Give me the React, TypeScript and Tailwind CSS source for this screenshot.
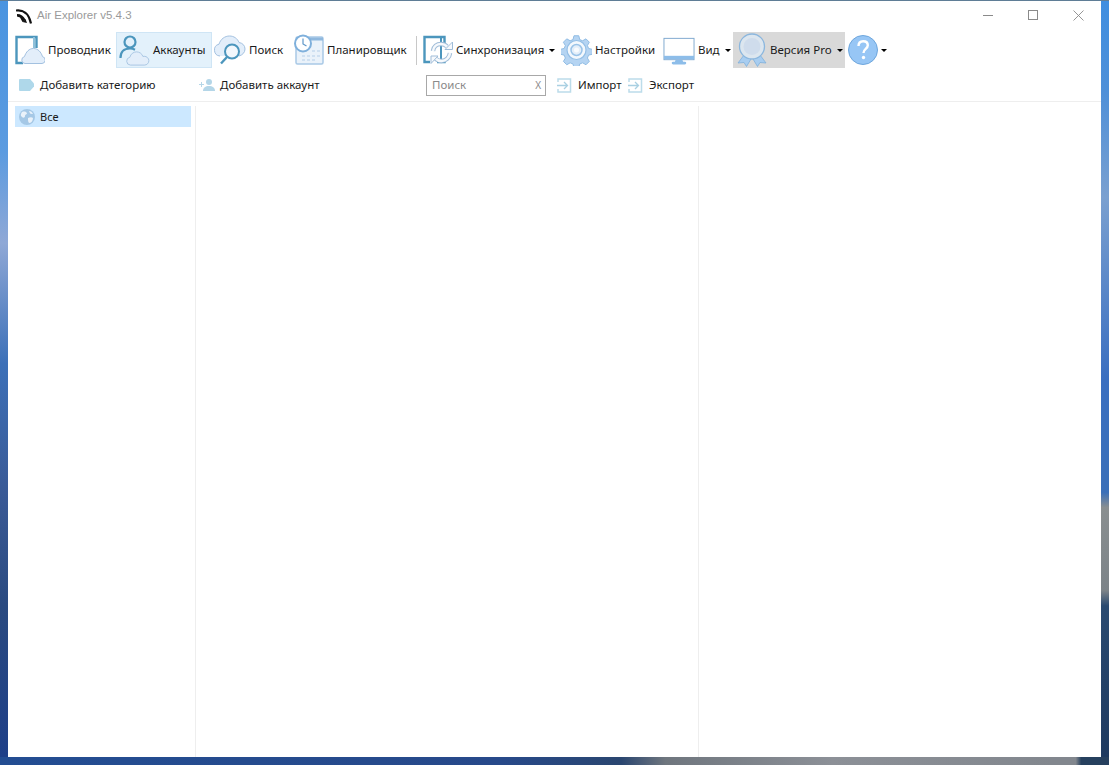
import type { ReactNode } from 'react'

const stroke = '#4c96bd'
const cloudFill = '#e3eefa'
const cloudLine = '#a3c1e0'

const Cloud = ({ x = 0, y = 0, s = 1 }: { x?: number; y?: number; s?: number }) => (
  <path
    transform={`translate(${x} ${y}) scale(${s})`}
    d="M5 16a4.500 4.500 0 0 1-.6-8.900C5.300 3.300 8.500 1 12 1c3.300 0 6.200 2 7.200 5.200.6-.2 1-.2 1.500-.2 2.800 0 5.300 2.300 5.300 5s-2.300 5-5 5z"
    fill={cloudFill}
    stroke={cloudLine}
    strokeWidth="1"
  />
)

const ExplorerIcon = () => (
  <svg width="30" height="32" viewBox="0 0 30 32" fill="none">
    <path d="M8 29H1.500V3H21.500V14" stroke={stroke} strokeWidth="2.400" />
    <path d="M19 3v11" stroke="#8fc0da" strokeWidth="2" />
    <path d="M10 29.500a3.500 3.500 0 0 1-.5-6.900C11 18 14 14.500 18.500 14.500s7.500 3.500 9 8.100a3.500 3.500 0 0 1-.5 6.900z" fill={cloudFill} stroke={cloudLine} />
  </svg>
)

const AccountsIcon = () => (
  <svg width="31" height="32" viewBox="0 0 31 32" fill="none">
    <circle cx="11" cy="8" r="5.500" stroke={stroke} strokeWidth="2.200" />
    <path d="M1.500 24c0-6 3.500-9.500 9.500-9.500 2 0 3.500.4 5 1.200" stroke={stroke} strokeWidth="2.200" />
    <Cloud x={7} y={17} s={0.88} />
  </svg>
)

const SearchIcon = () => (
  <svg width="33" height="32" viewBox="0 0 33 32" fill="none">
    <path
      d="M7 22a6 6 0 0 1-1-11.800C7.500 5 12 2 16.500 2c4.400 0 8 2.500 9.500 6.500 3.500.5 6 3 6 6.500 0 3.500-2.500 6-6 7"
      fill={cloudFill}
      stroke={cloudLine}
      strokeWidth="1"
    />
    <circle cx="19" cy="17.500" r="7" fill="#f2f7fc" stroke={stroke} strokeWidth="2" />
    <path d="M14 23l-6 6.500" stroke={stroke} strokeWidth="2.400" />
  </svg>
)

const SchedulerIcon = () => (
  <svg width="31" height="32" viewBox="0 0 31 32" fill="none">
    <rect x="3" y="3" width="27" height="27" rx="1.500" fill="#eaf2fa" stroke="#a9c9e6" strokeWidth="1.500" />
    <path d="M3 5h27" stroke="#8fb8de" strokeWidth="3" />
    <g fill="#cfe0f1">
      <rect x="19" y="16" width="3" height="2" />
      <rect x="24" y="16" width="3" height="2" />
      <rect x="9" y="21" width="3" height="2" />
      <rect x="14" y="21" width="3" height="2" />
      <rect x="19" y="21" width="3" height="2" />
      <rect x="24" y="21" width="3" height="2" />
      <rect x="9" y="25" width="3" height="2" />
      <rect x="14" y="25" width="3" height="2" />
      <rect x="19" y="25" width="3" height="2" />
    </g>
    <circle cx="10" cy="9.500" r="8" fill="#fff" stroke="#7fb0dc" strokeWidth="2" />
    <path d="M10 4.500v5.500l3.500 2" stroke="#5f97c8" strokeWidth="1.200" />
  </svg>
)

const syncTop = 'M10 17c.5-4.500 4-7 8-7 2.500 0 4.500 1 6 2.500'
const syncBottom = 'M27 19c-.5 4.500-4 8-8.500 8-2.500 0-4.500-1-6-2.500'

const SyncIcon = () => (
  <svg width="30" height="32" viewBox="0 0 30 32" fill="none">
    <path d="M7 28H1.500V3H21.500v6M21.500 27v1H14" stroke={stroke} strokeWidth="2.400" />
    <path d="M18 3v25" stroke={stroke} strokeWidth="2" />
    <path d={syncTop} stroke="#9fbcd8" strokeWidth="4.500" />
    <path d={syncTop} stroke="#f6f9fc" strokeWidth="2.500" />
    <path d="M22 15.500h7.500V8z" fill="#f6f9fc" stroke="#9fbcd8" />
    <path d={syncBottom} stroke="#9fbcd8" strokeWidth="4.500" />
    <path d={syncBottom} stroke="#f6f9fc" strokeWidth="2.500" />
    <path d="M15 22H8v7.500z" fill="#f6f9fc" stroke="#9fbcd8" />
  </svg>
)

const GearIcon = () => (
  <svg width="31" height="32" viewBox="0 0 31 32" fill="none">
    <path
      d="M13 1h5l1 4 3 1.200 3.500-2 3.500 3.500-2 3.500 1.200 3 4 1v5l-4 1-1.200 3 2 3.500-3.500 3.500-3.500-2-3 1.200-1 4h-5l-1-4-3-1.200-3.500 2-3.500-3.500 2-3.500-1.200-3-4-1v-5l4-1 1.200-3-2-3.500 3.500-3.500 3.500 2 3-1.200z"
      fill="#b5d4f2"
      stroke="#8dbae3"
      strokeWidth="1"
      transform="translate(0.500 0.800) scale(0.96)"
    />
    <circle cx="15.500" cy="16" r="9.500" fill="#f3f8fd" stroke="#94bfe6" strokeWidth="1.200" />
    <circle cx="15.500" cy="16" r="5.500" fill="#e3eef9" stroke="#9ac3e8" strokeWidth="1.500" />
    <circle cx="15.500" cy="16" r="2.500" fill="#f8fbfe" />
  </svg>
)

const MonitorIcon = () => (
  <svg width="32" height="32" viewBox="0 0 33 32" fill="none">
    <rect x="1" y="4" width="31" height="22" fill="#fff" stroke="#7fa9cf" strokeWidth="1" />
    <rect x="1" y="22" width="31" height="3.500" fill="#8dbde9" />
    <path d="M13 26h7l1 3h-9z" fill="#8dbde9" />
    <rect x="9" y="28" width="15" height="3" rx="1.500" fill="#8dbde9" />
  </svg>
)

const ProIcon = () => (
  <svg width="30" height="34" viewBox="0 0 30 34" fill="none">
    <path d="M7 22L1 30l6-.5 2.500 4L14 26z" fill="#a8cdf0" stroke="#7fb0dc" strokeWidth="0.800" />
    <path d="M23 22l6 8-6-.5-2.500 4L16 26z" fill="#a8cdf0" stroke="#7fb0dc" strokeWidth="0.800" />
    <circle cx="15" cy="13.500" r="12.500" fill="#dce6ef" stroke="#8cb7de" strokeWidth="1.300" />
    <circle cx="15" cy="13.500" r="8.500" fill="#cfdcec" />
  </svg>
)

const HelpIcon = () => (
  <svg width="30" height="30" viewBox="0 0 30 30" fill="none">
    <circle cx="15" cy="15" r="14.500" fill="#97c6f5" stroke="#6ea6dc" strokeWidth="1" />
    <path d="M10.500 11c0-3 2-4.800 4.700-4.800 2.800 0 4.600 1.700 4.600 4.100 0 3.600-4.300 3.800-4.300 7.700" stroke="#fff" strokeWidth="2.400" />
    <circle cx="15.500" cy="22.500" r="1.700" fill="#fff" />
  </svg>
)

const LogoIcon = () => (
  <svg width="16" height="16" viewBox="0 0 16 16" fill="none">
    <path d="M0 2.500c7-1 13 3 15 13" stroke="#111" strokeWidth="2.200" />
    <path d="M1 6c4 0 6.500 2 8.500 5.500l-3 2.500L4 9.500 1 8.500z" fill="#111" />
    <path d="M11 15l-1.500-4-3 3z" fill="#111" />
  </svg>
)

const Caret = () => <span className="w-0 h-0 border-x-[3px] border-x-transparent border-t-[3px] border-t-black" />

const TagIcon = () => (
  <svg width="15" height="12" viewBox="0 0 15 12">
    <path d="M1 0h10l4 4.500V7.500L11 12H1a1 1 0 0 1-1-1V1a1 1 0 0 1 1-1z" fill="#afd8ea" />
  </svg>
)

const AddUserIcon = () => (
  <svg width="16" height="12" viewBox="0 0 16 12" fill="#b4d6e8">
    <circle cx="10" cy="3" r="3" />
    <path d="M4 12c0-3.500 2.500-5 6-5s6 1.500 6 5z" />
    <path d="M2 3h1v2h2v1H3v2H2V6H0V5h2z" />
  </svg>
)

const BoxArrow = () => (
  <svg width="16" height="15" viewBox="0 0 16 15" fill="none">
    <path d="M1 4V1h12.500v13H1v-3" stroke="#bcdcea" strokeWidth="1.500" />
    <path d="M0 7.500h10M7 4l3.500 3.500L7 11" stroke="#a9d0e2" strokeWidth="1.300" />
  </svg>
)

const GlobeIcon = () => (
  <svg width="16" height="16" viewBox="0 0 16 16">
    <circle cx="8" cy="8" r="8" fill="#a5c8e6" />
    <path d="M3 3c3-1 4 0 5 1 0 2-2 1-2 3S4 9 3 8 1 6 3 3zM9 9c2-1 4-1 5 0 0 3-2 5-4 5-1-1-1-3-1-5zM10 2c2 0 3 1 4 3-2 0-3 0-4-3z" fill="#eaf2fa" />
  </svg>
)

const ToolButton = ({ icon, label, className, caret }: { icon: ReactNode; label: string; className: string; caret?: boolean }) => (
  <div className={`flex items-center h-9 shrink-0 ${className}`}>
    {icon}
    <span className="ml-[3px] whitespace-nowrap">{label}</span>
    {caret && <span className="ml-[5px] flex"><Caret /></span>}
  </div>
)

const App = () => {
  return (
    <div className="h-[765px] w-[1109px] overflow-hidden flex flex-col font-['Noto_Sans','Liberation_Sans',sans-serif] text-[11.5px] text-[#1a1a1a]">
      <div className="h-px shrink-0 bg-[#5f7d96]" />
      <div className="flex-1 min-h-0 flex">
        {/* wallpaper on the left of the window */}
        <div className="w-2 shrink-0 bg-[linear-gradient(180deg,#4a94e0_0%,#5b9be0_20%,#8fa8d6_32%,#3c70b8_48%,#3a5a96_65%,#2a4a80_80%,#1e3f88_100%)]" />

        <div className="flex-1 min-w-0 bg-white flex flex-col">
          <div className="h-[30px] flex items-center pl-2 shrink-0">
            <LogoIcon />
            <span className="ml-[5px] text-[#9a9a9a] font-['Liberation_Sans',sans-serif] text-[11.5px]">Air Explorer v5.4.3</span>
            <div className="ml-auto flex items-center pr-[17px] mb-[2px]">
              <div className="w-[10px] h-px bg-[#8a8a8a]" />
              <div className="ml-[35px] w-[10px] h-[10px] border border-[#8a8a8a]" />
              <svg className="ml-[35px]" width="11" height="11" viewBox="0 0 11 11" stroke="#8a8a8a" strokeWidth="0.900">
                <path d="M0.500 0.500l10 10M10.500 0.500l-10 10" />
              </svg>
            </div>
          </div>

          <div className="h-9 mt-px flex items-center pl-[7px] shrink-0">
            <ToolButton icon={<ExplorerIcon />} label="Проводник" className="w-[101px]" />
            <ToolButton icon={<AccountsIcon />} label="Аккаунты" className="w-[96px] pl-[2px] bg-[#e3f1fb] border border-[#cfe5f5]" />
            <ToolButton icon={<SearchIcon />} label="Поиск" className="w-[81px] pl-[1px]" />
            <ToolButton icon={<SchedulerIcon />} label="Планировщик" className="w-[123px]" />
            <div className="w-px h-[29px] bg-[#c8c8c8] mr-[6px] shrink-0" />
            <ToolButton icon={<SyncIcon />} label="Синхронизация" caret className="w-[138px]" />
            <ToolButton icon={<GearIcon />} label="Настройки" className="w-[102px]" />
            <ToolButton icon={<MonitorIcon />} label="Вид" caret className="w-[70px]" />
            <ToolButton icon={<ProIcon />} label="Версия Pro" caret className="w-[112px] pl-[4px] bg-[#d9d9d9]" />
            <div className="ml-[3px] flex items-center gap-[3px]">
              <HelpIcon />
              <Caret />
            </div>
          </div>

          <div className="h-[34px] pt-px flex items-center shrink-0 border-b border-[#eeeeee]">
            <div className="ml-[11px] w-[180px] flex items-center">
              <TagIcon />
              <span className="ml-[6px]">Добавить категорию</span>
            </div>
            <div className="w-[227px] flex items-center">
              <AddUserIcon />
              <span className="ml-[5px]">Добавить аккаунт</span>
            </div>
            <div className="w-[120px] h-[21px] border border-[#a8a8a8] flex items-center justify-between pl-[5px] pr-[4px] text-[#8a8a8a]">
              <span>Поиск</span>
              <span className="text-[10px]">X</span>
            </div>
            <div className="ml-[11px] w-[71px] flex items-center">
              <BoxArrow />
              <span className="ml-[5px]">Импорт</span>
            </div>
            <div className="flex items-center">
              <BoxArrow />
              <span className="ml-[5px]">Экспорт</span>
            </div>
          </div>

          <div className="flex-1 min-h-0 flex pt-1">
            <div className="w-[188px] shrink-0 pl-[7px] border-r border-[#eeeeee]">
              <div className="w-[176px] h-[21px] bg-[#cce8ff] flex items-center pl-1">
                <GlobeIcon />
                <span className="ml-[5px] mt-[2px] text-[11px]">Все</span>
              </div>
            </div>
            <div className="w-[503px] shrink-0 border-r border-[#eeeeee]" />
            <div className="flex-1" />
          </div>
        </div>

        {/* wallpaper on the right, the rocks start about two thirds down */}
        <div className="w-2 shrink-0 bg-[linear-gradient(180deg,#3f8ee0_0%,#4f90d8_12%,#7aa0d0_26%,#3a6fc0_50%,#3a6fb8_65%,#8a8f90_67%,#7c8388_78%,#2a4a70_80%,#1e3a60_100%)]" />
      </div>
      <div className="h-2 shrink-0 bg-[linear-gradient(90deg,#234d92_0%,#27498a_45%,#2a4670_56%,#6f767e_60%,#8c9097_75%,#82878e_95%,#82878e_97%,#26405e_97.500%)]" />
    </div>
  )
}

export default App
